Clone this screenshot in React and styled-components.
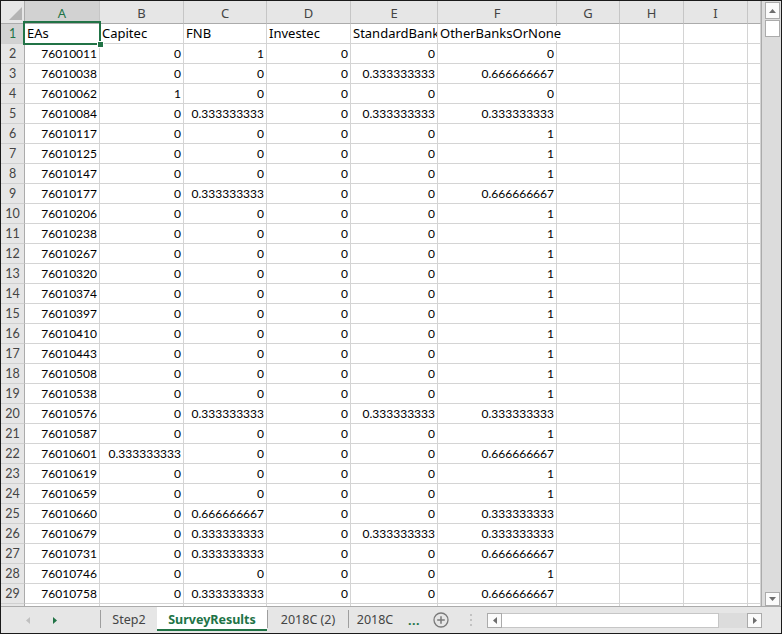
import React from 'react'
import styled, { createGlobalStyle } from 'styled-components'

const GlobalStyle = createGlobalStyle`
  html, body {
    margin: 0;
    padding: 0;
    background: #fff;
  }
  * { box-sizing: border-box; }
`

const GREEN = '#217346'

const columns = ['A', 'B', 'C', 'D', 'E', 'F', 'G', 'H', 'I', '']

const header = ['EAs', 'Capitec', 'FNB', 'Investec', 'StandardBank', 'OtherBanksOrNone']

const T = '0.333333333'
const S = '0.666666667'

const rows = [
  ['76010011', '0', '1', '0', '0', '0'],
  ['76010038', '0', '0', '0', T, S],
  ['76010062', '1', '0', '0', '0', '0'],
  ['76010084', '0', T, '0', T, T],
  ['76010117', '0', '0', '0', '0', '1'],
  ['76010125', '0', '0', '0', '0', '1'],
  ['76010147', '0', '0', '0', '0', '1'],
  ['76010177', '0', T, '0', '0', S],
  ['76010206', '0', '0', '0', '0', '1'],
  ['76010238', '0', '0', '0', '0', '1'],
  ['76010267', '0', '0', '0', '0', '1'],
  ['76010320', '0', '0', '0', '0', '1'],
  ['76010374', '0', '0', '0', '0', '1'],
  ['76010397', '0', '0', '0', '0', '1'],
  ['76010410', '0', '0', '0', '0', '1'],
  ['76010443', '0', '0', '0', '0', '1'],
  ['76010508', '0', '0', '0', '0', '1'],
  ['76010538', '0', '0', '0', '0', '1'],
  ['76010576', '0', T, '0', T, T],
  ['76010587', '0', '0', '0', '0', '1'],
  ['76010601', T, '0', '0', '0', S],
  ['76010619', '0', '0', '0', '0', '1'],
  ['76010659', '0', '0', '0', '0', '1'],
  ['76010660', '0', S, '0', '0', T],
  ['76010679', '0', T, '0', T, T],
  ['76010731', '0', T, '0', '0', S],
  ['76010746', '0', '0', '0', '0', '1'],
  ['76010758', '0', T, '0', '0', S],
]

const Frame = styled.div`
  width: 782px;
  height: 634px;
  border: 1px solid #1a1a1a;
  display: flex;
  flex-direction: column;
  overflow: hidden;
  background: #fff;
`

const Main = styled.div`
  height: 605px;
  display: flex;
`

const Sheet = styled.div`
  flex: 1;
  overflow: hidden;
  border-right: 1px solid #ababab;
  display: grid;
  grid-template-columns: 24px 75px 84px 83px 84px 87px 119px 63px 64px 64px 1fr;
  grid-template-rows: 23px;
  grid-auto-rows: 20px;
  font-family: Lato, "Liberation Sans", sans-serif;
  font-size: 12px;
  color: #000;
`

const Corner = styled.div`
  background: #e6e6e6;
  border-right: 1px solid #ababab;
  border-bottom: 1px solid #ababab;
  display: flex;
  align-items: flex-end;
  justify-content: flex-end;
  padding: 0 2px 3px 0;
`

const ColHead = styled.div`
  background: ${p => (p.$sel ? '#d2d2d2' : '#e6e6e6')};
  color: ${p => (p.$sel ? GREEN : '#444')};
  border-right: 1px solid #c6c6c6;
  border-bottom: 1px solid #ababab;
  display: flex;
  align-items: center;
  justify-content: center;
  font-family: "Noto Sans", sans-serif;
  font-size: 13px;
  padding-top: 1px;
`

const RowHead = styled.div`
  background: ${p => (p.$sel ? '#d2d2d2' : '#e6e6e6')};
  color: ${p => (p.$sel ? GREEN : '#444')};
  border-right: 1px solid #ababab;
  border-bottom: 1px solid #d0d0d0;
  display: flex;
  align-items: flex-end;
  justify-content: center;
  padding-bottom: 2px;
  line-height: 15px;
  font-size: 12.5px;
`

const Cell = styled.div`
  position: relative;
  border-right: 1px solid #d4d4d4;
  border-bottom: 1px solid #d4d4d4;
  display: flex;
  align-items: flex-end;
  justify-content: ${p => (p.$num ? 'flex-end' : 'flex-start')};
  padding: 0 2px 2px 2px;
  line-height: 15px;
  white-space: nowrap;
  font-family: ${p => (p.$num ? 'Lato, "Liberation Sans", sans-serif' : '"Noto Sans", "Open Sans", sans-serif')};
  font-size: ${p => (p.$num ? 12 : 13)}px;
  overflow: ${p => (p.$clip ? 'hidden' : 'visible')};
  z-index: ${p => (p.$raise ? 2 : 1)};

  ${p =>
    p.$active &&
    `
    &::after {
      content: '';
      position: absolute;
      top: -3px;
      left: -2px;
      right: -2px;
      bottom: -2px;
      border: 2px solid ${GREEN};
      pointer-events: none;
    }
    &::before {
      content: '';
      position: absolute;
      right: -5px;
      bottom: -5px;
      width: 5px;
      height: 5px;
      background: ${GREEN};
      border: 1px solid #fff;
      z-index: 3;
    }
  `}
`

const Label = styled.span`
  position: relative;
  background: #fff;
  padding-right: 1px;
`

const VScroll = styled.div`
  width: 19px;
  background: #dcdcdc;
  display: flex;
  flex-direction: column;
  padding: 1px 1px 0 3px;
`

const ScrollBtn = styled.div`
  width: 15px;
  height: ${p => p.$h || 15}px;
  background: #fbfbfb;
  border: 1px solid #ababab;
  display: flex;
  align-items: center;
  justify-content: center;
  flex: none;
`

const VThumb = styled.div`
  width: 15px;
  height: 17px;
  margin-top: 1px;
  background: #fff;
  border: 1px solid #ababab;
`

const Fill = styled.div`
  flex: 1;
`

const TabBar = styled.div`
  height: 27px;
  border-top: 1px solid #ababab;
  background: #e6e6e6;
  display: flex;
  align-items: flex-start;
  font-family: "Noto Sans", "Open Sans", sans-serif;
  font-size: 12.5px;
  color: #444;
`

const Nav = styled.div`
  width: 99px;
  height: 24px;
  display: flex;
  align-items: center;
  gap: 23px;
  padding-left: 25px;
  padding-top: 2px;
`

const Sep = styled.div`
  width: 1px;
  height: 18px;
  margin-top: 3px;
  background: #9e9e9e;
  flex: none;
`

const Tab = styled.div`
  width: ${p => p.$w}px;
  height: 24px;
  padding-top: 2px;
  display: flex;
  align-items: center;
  justify-content: center;
  white-space: nowrap;
  flex: none;
  background: ${p => (p.$active ? '#fff' : 'transparent')};
  color: ${p => (p.$active ? GREEN : '#444')};
  font-weight: ${p => (p.$active ? 700 : 400)};
  border-bottom: 2px solid ${p => (p.$active ? GREEN : 'transparent')};
`

const More = styled.div`
  width: 32px;
  color: ${GREEN};
  font-weight: 700;
  height: 24px;
  display: flex;
  align-items: center;
  padding: 2px 0 0 7px;
  letter-spacing: 0.5px;
  flex: none;
`

const PlusWrap = styled.div`
  height: 26px;
  display: flex;
  align-items: center;
  flex: none;
`

const Gripper = styled.div`
  width: 25px;
  height: 26px;
  display: flex;
  flex-direction: column;
  align-items: center;
  justify-content: center;
  gap: 3px;
  margin-left: auto;
  margin-right: 4px;

  i {
    width: 2px;
    height: 2px;
    background: #c2c2c2;
  }
`

const HScroll = styled.div`
  width: 275px;
  height: 15px;
  margin-top: 6px;
  display: flex;
  background: #dcdcdc;
`

const HThumb = styled.div`
  width: 217px;
  height: 15px;
  background: #fff;
  border: 1px solid #c6c6c6;
  border-left: none;
`

const BarCorner = styled.div`
  width: 19px;
  height: 26px;
  background: #e6e6e6;
`

const Arrow = ({ dir, color = '#6d6d6d', size = 7 }) => {
  const pts = {
    up: '0,4 3.5,0 7,4',
    down: '0,0 7,0 3.5,4',
    left: '4,0 4,7 0,3.5',
    right: '0,0 0,7 4,3.5',
  }[dir]
  const vertical = dir === 'up' || dir === 'down'
  return (
    <svg width={vertical ? size : 4} height={vertical ? 4 : size} viewBox={vertical ? '0 0 7 4' : '0 0 4 7'}>
      <polygon points={pts} fill={color} />
    </svg>
  )
}

const PlusIcon = () => (
  <svg width="16" height="16" viewBox="0 0 16 16">
    <circle cx="8" cy="8" r="7" fill="none" stroke="#7a7a7a" strokeWidth="1.3" />
    <path d="M8 4.2v7.6M4.2 8h7.6" stroke="#7a7a7a" strokeWidth="1.5" />
  </svg>
)

const SelectAll = () => (
  <svg width="13" height="13" viewBox="0 0 13 13">
    <polygon points="13,0 13,13 0,13" fill="#b4b4b4" />
  </svg>
)

function App() {
  return (
    <Frame>
      <GlobalStyle />
      <Main>
        <Sheet>
          <Corner>
            <SelectAll />
          </Corner>
          {columns.map((c, i) => (
            <ColHead key={i} $sel={c === 'A'}>{c}</ColHead>
          ))}

          <RowHead $sel>1</RowHead>
          {columns.map((c, i) => (
            <Cell key={i} $active={i === 0} $raise={i === 0 || i === 5} $clip={i === 4}>
              {header[i] && <Label>{header[i]}</Label>}
            </Cell>
          ))}

          {rows.map((r, ri) => (
            <React.Fragment key={ri}>
              <RowHead>{ri + 2}</RowHead>
              {columns.map((c, ci) => (
                <Cell key={ci} $num>
                  {r[ci]}
                </Cell>
              ))}
            </React.Fragment>
          ))}

          <RowHead />
          {columns.map((c, ci) => (
            <Cell key={ci} $num />
          ))}
        </Sheet>
        <VScroll>
          <ScrollBtn $h={17}>
            <Arrow dir="up" />
          </ScrollBtn>
          <VThumb />
          <Fill />
          <ScrollBtn $h={14}>
            <Arrow dir="down" />
          </ScrollBtn>
        </VScroll>
      </Main>

      <TabBar>
        <Nav>
          <Arrow dir="left" color="#c0c0c0" />
          <Arrow dir="right" color={GREEN} />
        </Nav>
        <Sep />
        <Tab $w={56}>Step2</Tab>
        <Tab $w={110} $active>SurveyResults</Tab>
        <Sep />
        <Tab $w={80}>2018C (2)</Tab>
        <Sep />
        <Tab $w={52}>2018C</Tab>
        <More>...</More>
        <PlusWrap>
          <PlusIcon />
        </PlusWrap>
        <Gripper>
          <i />
          <i />
          <i />
        </Gripper>
        <HScroll>
          <ScrollBtn>
            <Arrow dir="left" />
          </ScrollBtn>
          <HThumb />
          <Fill />
          <ScrollBtn>
            <Arrow dir="right" />
          </ScrollBtn>
        </HScroll>
        <BarCorner />
      </TabBar>
    </Frame>
  )
}

export default App
